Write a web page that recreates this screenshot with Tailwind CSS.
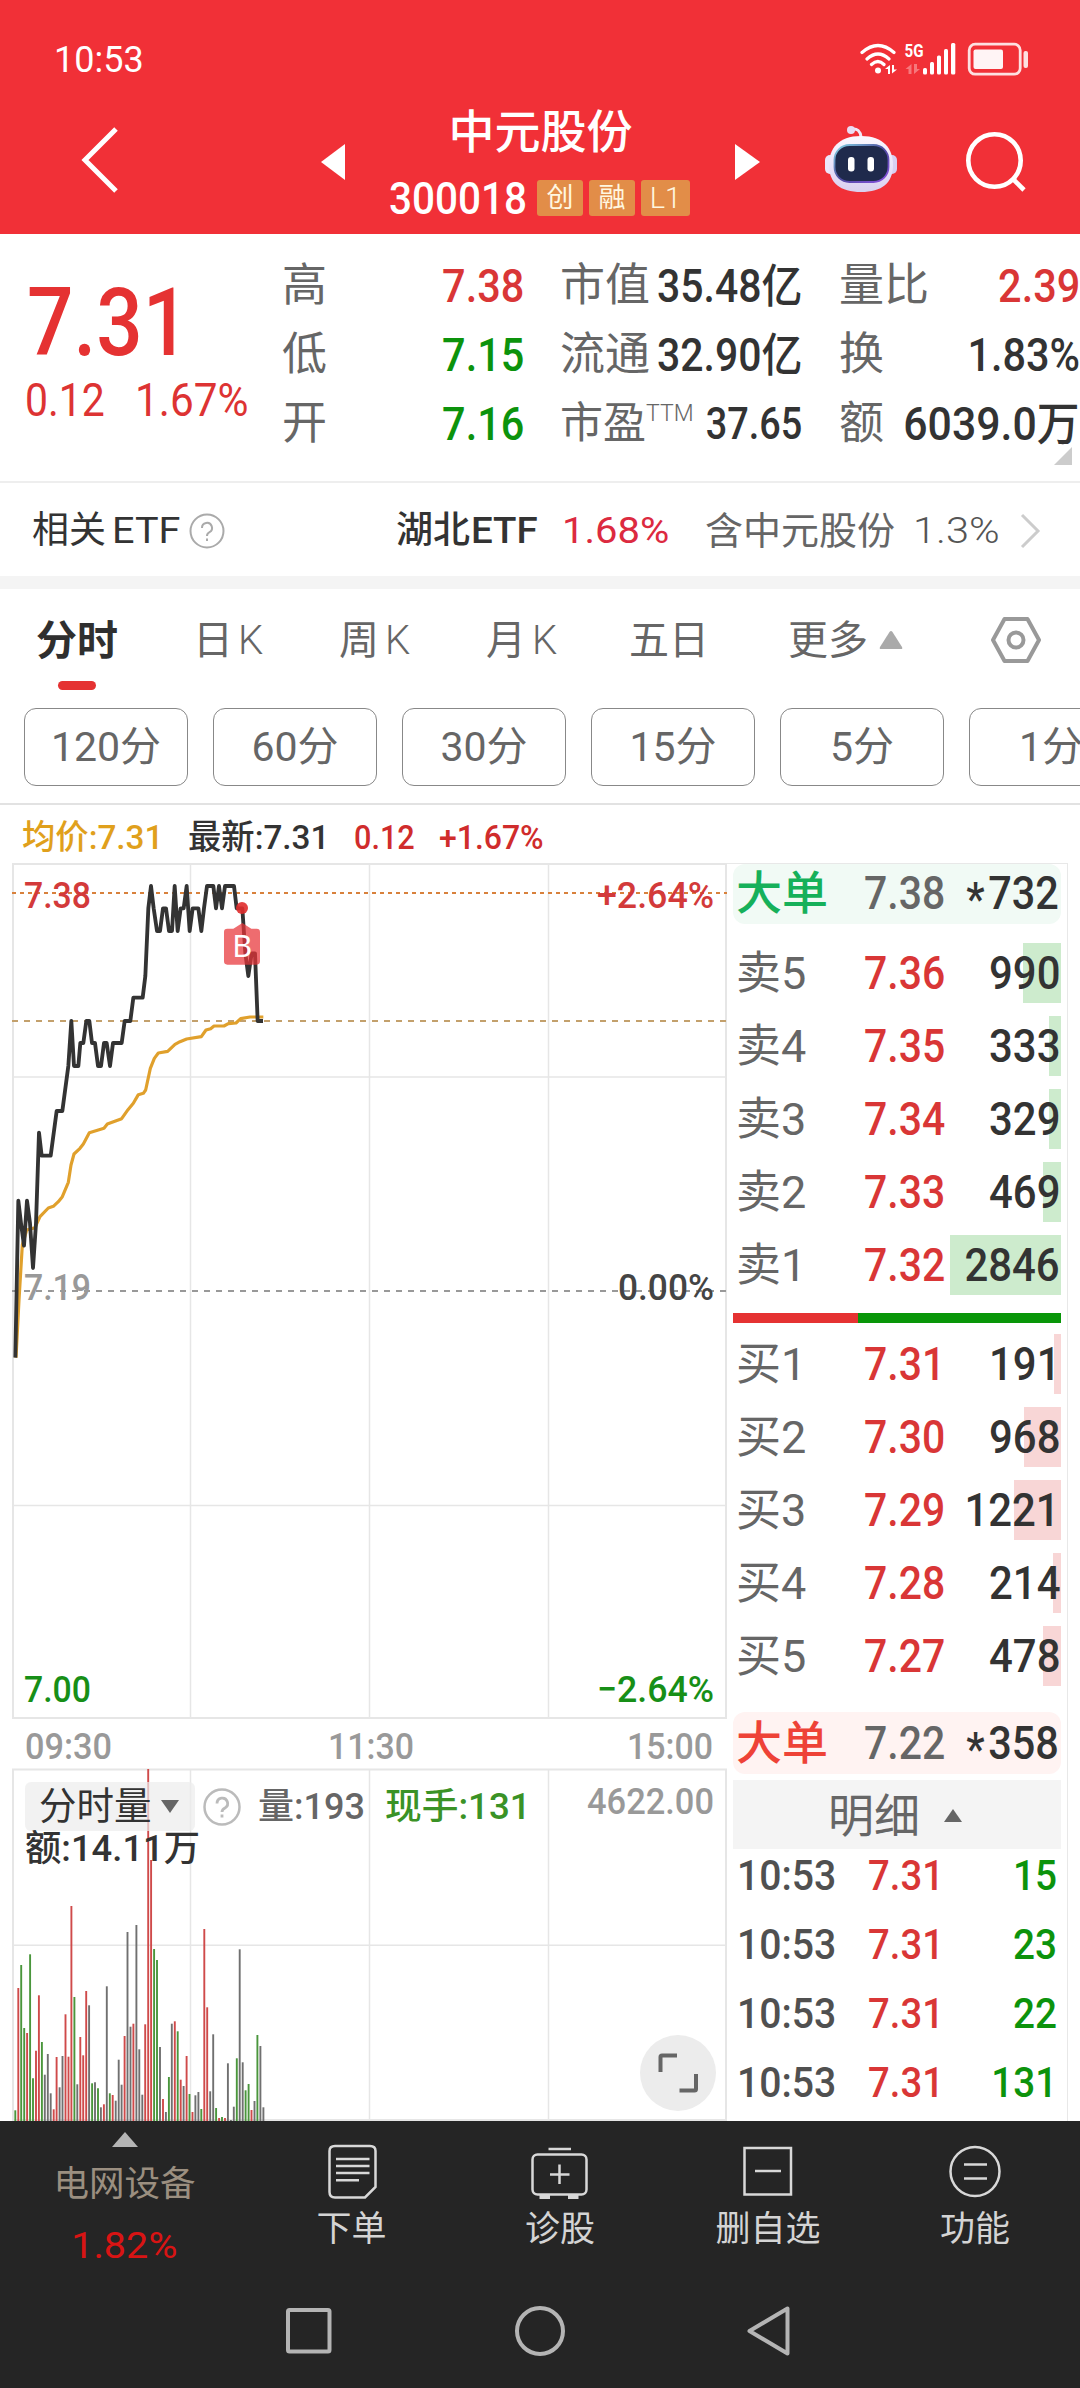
<!DOCTYPE html>
<html lang="zh-CN">
<head>
<meta charset="utf-8">
<title>中元股份 300018</title>
<script src="https://cdn.jsdelivr.net/npm/@tailwindcss/browser@4"></script>
</head>
<body class="bg-white">
<div class="flex h-[2388px] w-[1080px] flex-col overflow-hidden bg-white font-['Roboto','Noto_Sans_CJK_SC',sans-serif] leading-none whitespace-nowrap text-[#333]">

  <!-- Status bar + title bar -->
  <header class="h-[234px] shrink-0 bg-[#f13037] text-white">
    <div class="flex h-[84px] items-end justify-between pl-[54px] pr-[52px]">
      <span class="mb-[6px] text-[36px] leading-[36px]">10:53</span>
      <svg class="mb-[6px] h-[36px] w-[170px]" viewBox="858 42 170 36" fill="none" stroke="#fff" stroke-linecap="round">
        <g stroke-width="3.2"><path d="M862 52.500Q878 38.500 894 52.500M867 59Q878 49 889 59M871.500 64.500Q878 58.500 884 64.500"/></g>
        <g fill="#fff" stroke="none">
          <circle cx="878" cy="70.500" r="3"/>
          <path d="M885 69l5-4v9h-2v-5zM892 65v8.500l5-4h-3v-4.500z"/>
          <path d="M905.500 69l6-5v10h-3v-5zM914 64v10l6-5h-3v-5z" opacity=".35"/>
          <text x="904.500" y="57" font-size="18" font-weight="700" font-family="Roboto" textLength="19" lengthAdjust="spacingAndGlyphs">5G</text>
          <rect x="923" y="68" width="4" height="6.500" rx="1.500"/><rect x="930" y="62" width="4" height="12.500" rx="1.500"/><rect x="937" y="55.500" width="4" height="19" rx="1.500"/><rect x="944" y="49" width="4" height="25.500" rx="1.500"/><rect x="951" y="43" width="4.300" height="31.500" rx="1.500"/>
          <rect x="973.500" y="49.500" width="29.500" height="19.500" rx="2" opacity=".95"/>
          <rect x="1023.500" y="51" width="4.500" height="17" rx="2" opacity=".85"/>
        </g>
        <rect x="969.200" y="44.200" width="51" height="30" rx="6" stroke-width="2.800" opacity=".85"/>
      </svg>
    </div>
    <div class="flex h-[150px]">
      <div class="w-[320px] pt-[38px] pl-[78px]">
        <svg class="h-[76px] w-[44px]" viewBox="0 0 44 76" fill="none" stroke="#fff" stroke-width="5"><path d="M38 7L7 38L38 69"/></svg>
      </div>
      <svg class="mt-[60px] h-[36px] w-[26px]" viewBox="0 0 26 36" fill="#fff"><path d="M1 18L25 0V36z"/></svg>
      <div class="flex w-[389px] flex-col items-center">
        <h1 class="mt-[25px] text-[46px] leading-[46px] font-medium">中元股份</h1>
        <div class="mt-[25px] flex h-[36px] w-[303px] items-center">
          <span class="mt-[2px] w-[149px] origin-left scale-x-[.92] text-[44px] font-medium">300018</span>
          <span class="-ml-[1px] flex h-[36px] w-[46px] items-center justify-center rounded-[3px] bg-[#e28d48] text-[27px] text-[#fff7e0]">创</span>
          <span class="ml-[6px] flex h-[36px] w-[46px] items-center justify-center rounded-[3px] bg-[#e28d48] text-[27px] text-[#fff7e0]">融</span>
          <span class="ml-[6px] flex h-[36px] w-[49px] items-center justify-center rounded-[3px] bg-[#e28d48] text-[29px] font-light text-[#fff7e0]">L1</span>
        </div>
      </div>
      <svg class="mt-[60px] h-[36px] w-[26px]" viewBox="0 0 26 36" fill="#fff"><path d="M25 18L0 0V36z"/></svg>
      <svg class="mt-[38px] ml-[60px] h-[76px] w-[80px]" viewBox="821 122 80 76">
        <defs>
          <linearGradient id="shell" x1="0" y1="0" x2="0" y2="1"><stop offset="0" stop-color="#fbf8ff"/><stop offset=".65" stop-color="#e6def8"/><stop offset="1" stop-color="#d9d0ee"/></linearGradient>
          <linearGradient id="rim" x1="0" y1="0" x2="1" y2="1"><stop offset="0" stop-color="#86d7e6"/><stop offset=".5" stop-color="#4c4a9e"/><stop offset="1" stop-color="#8a4fe0"/></linearGradient>
        </defs>
        <path d="M861 137Q860 128 852 129" fill="none" stroke="#f1e6f6" stroke-width="3"/>
        <circle cx="851" cy="130" r="4" fill="#e9dcf3"/>
        <rect x="825" y="155" width="12" height="19" rx="5" fill="#ece6fa"/><rect x="885" y="155" width="12" height="19" rx="5" fill="#d8cff2"/>
        <path d="M861 136C884 136 893 149 893 165C893 183 882 192 861 192C840 192 829 183 829 165C829 149 838 136 861 136z" fill="url(#shell)"/>
        <rect x="834.500" y="145" width="54" height="37" rx="15" fill="#1f2a4c" stroke="url(#rim)" stroke-width="1.800"/>
        <rect x="848" y="157" width="6.500" height="14.500" rx="3" fill="#fff"/><rect x="867.500" y="157" width="6.500" height="14.500" rx="3" fill="#fff"/>
      </svg>
      <svg class="mt-[42px] ml-[62px] h-[68px] w-[68px]" viewBox="963 126 68 68" fill="none" stroke="#fff" stroke-width="4.600"><circle cx="994.500" cy="160.500" r="26.200"/><path d="M1013 179L1024 190"/></svg>
    </div>
  </header>

  <!-- Quote summary -->
  <section class="flex h-[249px] shrink-0 border-b-2 border-[#eee] text-[46px] font-medium">
    <div class="w-[282px] text-[#e53232]">
      <div class="mt-[46px] ml-[27px] h-[86px] w-[190px] origin-left scale-x-[.87] text-[94px] leading-[86px]">7.31</div>
      <div class="mt-[4px] flex h-[60px] items-center pl-[25px] font-normal text-[#dd3333]">
        <span class="w-[110px] origin-left scale-x-[.89]">0.12</span>
        <span class="w-[120px] origin-left scale-x-[.92]">1.67%</span>
      </div>
    </div>
    <div class="mt-[17px] w-[242px]">
      <div class="flex h-[69px] items-center justify-between"><span class="text-[45px] font-normal text-[#666]">高</span><span class="origin-right scale-x-[.9] text-[#d93636]">7.38</span></div>
      <div class="flex h-[69px] items-center justify-between"><span class="text-[45px] font-normal text-[#666]">低</span><span class="origin-right scale-x-[.9] text-[#0c930c]">7.15</span></div>
      <div class="flex h-[69px] items-center justify-between"><span class="text-[45px] font-normal text-[#666]">开</span><span class="origin-right scale-x-[.9] text-[#0c930c]">7.16</span></div>
    </div>
    <div class="mt-[17px] ml-[36px] w-[242px]">
      <div class="flex h-[69px] items-center justify-between"><span class="w-[90px] text-[45px] font-normal text-[#666]">市值</span><span class="flex w-[152px] justify-end"><span class="origin-right scale-x-[.89]">35.48亿</span></span></div>
      <div class="flex h-[69px] items-center justify-between"><span class="w-[90px] text-[45px] font-normal text-[#666]">流通</span><span class="flex w-[152px] justify-end"><span class="origin-right scale-x-[.89]">32.90亿</span></span></div>
      <div class="flex h-[69px] items-center justify-between"><span class="flex text-[43px] font-normal text-[#666]">市盈<span class="text-[23px] font-light">TTM</span></span><span class="flex w-[98px] justify-end"><span class="origin-right scale-x-[.86] text-[44px]">37.65</span></span></div>
    </div>
    <div class="mt-[17px] ml-[37px] w-[241px]">
      <div class="flex h-[69px] items-center justify-between"><span class="text-[45px] font-normal text-[#666]">量比</span><span class="origin-right scale-x-[.9] text-[#d93636]">2.39</span></div>
      <div class="flex h-[69px] items-center justify-between"><span class="text-[45px] font-normal text-[#666]">换</span><span class="origin-right scale-x-[.9]">1.83%</span></div>
      <div class="flex h-[69px] items-center justify-between"><span class="text-[45px] font-normal text-[#666]">额</span><span class="origin-right scale-x-[.93]">6039.0万</span></div>
      <svg class="-mt-[11px] ml-[215px] h-[18px] w-[18px]" viewBox="0 0 18 18" fill="#ccc"><path d="M18 0V18H0z"/></svg>
    </div>
  </section>

  <!-- Related ETF -->
  <section class="flex h-[93px] shrink-0 items-center pt-[2px] pl-[32px] text-[37px]">
    <span class="w-[80px]">相关</span><span class="w-[72px] origin-left scale-x-[1.07]">ETF</span>
    <svg class="ml-[5px] h-[36px] w-[36px]" viewBox="0 0 36 36" fill="none" stroke="#aaa" stroke-width="2"><circle cx="18" cy="18" r="16.500"/><path d="M13 15a5 5 0 1 1 7.500 4.200Q18 20.500 18 23M18 25.500v2.500"/></svg>
    <span class="ml-[171px] w-[75px] font-medium">湖北</span><span class="w-[72px] origin-left scale-x-[1.04] font-medium">ETF</span>
    <span class="ml-[19px] w-[110px] origin-left scale-x-[1.08] text-[#dc2a40]">1.68%</span>
    <span class="ml-[33px] w-[190px] text-[38px] text-[#666]">含中元股份</span>
    <span class="ml-[18px] w-[84px] origin-left scale-x-[1.12] font-light text-[#555]">1.3%</span>
    <svg class="ml-[20px] h-[36px] w-[26px]" viewBox="0 0 26 36" fill="none" stroke="#ccc" stroke-width="3"><path d="M5 2L21 18L5 34"/></svg>
  </section>
  <div class="h-[13px] shrink-0 bg-[#f4f4f4]"></div>

  <!-- Period tabs -->
  <nav class="flex h-[105px] shrink-0 text-[40px] leading-[104px] text-[#666]">
    <div class="ml-[36px] flex w-[82px] flex-col items-center">
      <span class="h-[92px] text-[41px] font-bold text-[#2f2f2f]">分时</span>
      <span class="h-[9px] w-[38px] rounded-full bg-[#e53232]"></span>
    </div>
    <span class="ml-[75px] w-[75px]">日<span class="ml-[5px] font-light">K</span></span>
    <span class="ml-[71px] w-[76px]">周<span class="ml-[6px] font-light">K</span></span>
    <span class="ml-[71px] w-[76px]">月<span class="ml-[6px] font-light">K</span></span>
    <span class="ml-[67px] w-[80px]">五日</span>
    <span class="ml-[79px] w-[82px]">更多</span>
    <svg class="mt-[41px] ml-[9px] h-[20px] w-[24px]" viewBox="0 0 24 20" fill="#aaa"><path d="M10.500 2Q12 0 13.500 2L23 17Q24 19 22 19H2Q0 19 1 17z"/></svg>
    <svg class="mt-[26px] ml-[87px] h-[50px] w-[52px]" viewBox="0 0 52 50" fill="none" stroke="#999" stroke-width="4" stroke-linejoin="round"><path d="M14.500 4H37.500L49 25L37.500 46H14.500L3 25z"/><circle cx="26" cy="25" r="7.500"/></svg>
  </nav>
  <div class="flex h-[111px] shrink-0 gap-[25px] overflow-hidden border-b-2 border-[#e2e2e2] pt-[14px] pl-[24px] text-[41px] text-[#666]">
    <span class="flex h-[78px] w-[164px] shrink-0 items-center justify-center rounded-[12px] border border-[#888]">120分</span>
    <span class="flex h-[78px] w-[164px] shrink-0 items-center justify-center rounded-[12px] border border-[#888]">60分</span>
    <span class="flex h-[78px] w-[164px] shrink-0 items-center justify-center rounded-[12px] border border-[#888]">30分</span>
    <span class="flex h-[78px] w-[164px] shrink-0 items-center justify-center rounded-[12px] border border-[#888]">15分</span>
    <span class="flex h-[78px] w-[164px] shrink-0 items-center justify-center rounded-[12px] border border-[#888]">5分</span>
    <span class="flex h-[78px] w-[164px] shrink-0 items-center justify-center rounded-[12px] border border-[#888]">1分</span>
  </div>
  <div class="flex h-[58px] shrink-0 items-center pt-[6px] pl-[22px] text-[34px] font-medium">
    <span class="w-[166px] origin-left scale-x-[.98] text-[#e0a01c]">均价:7.31</span>
    <span class="w-[166px] origin-left scale-x-[.98]">最新:7.31</span>
    <span class="w-[85px] origin-left scale-x-[.9] text-[#d02c2c]">0.12</span>
    <span class="origin-left scale-x-[.94] text-[#d02c2c]">+1.67%</span>
  </div>

  <!-- Charts and order book -->
  <main class="flex h-[1258px] shrink-0">
    <div class="relative w-[727px] shrink-0">
      <svg id="chart" class="block h-[1258px] w-[727px]" viewBox="0 863 727 1258" fill="none">
        <g stroke="#e6e6e6" stroke-width="1.500">
          <path d="M190.500 864V1718M369.500 864V1718M548.500 864V1718M12 1077H726M12 1505.500H726"/>
          <path d="M190.500 1769V2120M369.500 1769V2120M548.500 1769V2120M12 1945.300H726"/>
          <path d="M13 864H726V1718H13zM13 1769.500H726V2120H13z" stroke-width="2"/>
        </g>
        <path d="M12 893H727" stroke="#d8813c" stroke-width="2" stroke-dasharray="4 4"/>
        <path d="M12 1021H727" stroke="#c3a06c" stroke-width="2" stroke-dasharray="6 6"/>
        <path d="M12 1291H727" stroke="#999" stroke-width="2" stroke-dasharray="6 6"/>
        <g id="volume" stroke-width="1.900"></g>
        <g font-family="Roboto" font-size="37" font-weight="500">
          <text x="24" y="908" fill="#d33a3a" textLength="67" lengthAdjust="spacingAndGlyphs">7.38</text>
          <text x="24" y="1300" fill="#999" textLength="67" lengthAdjust="spacingAndGlyphs">7.19</text>
          <text x="24" y="1702" fill="#178f17" textLength="67" lengthAdjust="spacingAndGlyphs">7.00</text>
          <text x="597" y="908" fill="#d33a3a" textLength="117" lengthAdjust="spacingAndGlyphs">+2.64%</text>
          <text x="618" y="1300" fill="#444" textLength="96" lengthAdjust="spacingAndGlyphs">0.00%</text>
          <text x="597" y="1702" fill="#178f17" textLength="117" lengthAdjust="spacingAndGlyphs">−2.64%</text>
          <g fill="#999">
            <text x="25" y="1759" textLength="87" lengthAdjust="spacingAndGlyphs">09:30</text>
            <text x="328" y="1759" textLength="86" lengthAdjust="spacingAndGlyphs">11:30</text>
            <text x="627" y="1759" textLength="86" lengthAdjust="spacingAndGlyphs">15:00</text>
            <text x="587" y="1814" textLength="127" lengthAdjust="spacingAndGlyphs">4622.00</text>
          </g>
        </g>
        <g transform="translate(0 850) scale(.33333)" stroke-linejoin="round">
          <polyline stroke="#e0a02c" stroke-width="9.500" points="48,1523 57,1350 67,1185 80,1140 105,1133 120,1100 145,1074 160,1069 175,1055 187,1040 205,997 213,945 222,912 240,895 250,882 268,848 312,835 322,822 365,806 384,779 400,760 415,734 430,730 437,720 451,655 463,625 475,609 503,604 525,583 540,575 560,567 604,560 618,540 632,536 642,528 672,528 685,521 708,519 722,506 750,501 790,501"/>
          <polyline stroke="#333" stroke-width="11.500" points="46,1523 55,1052 63,1120 72,1187 81,1052 90,1120 99,1254 108,1120 117,848 125,917 152,917 170,783 187,783 205,648 214,513 222,648 235,648 241,579 250,579 259,513 268,513 276,579 285,579 294,648 303,648 312,579 320,579 330,648 339,579 365,579 374,513 391,513 400,443 428,443 436,378 445,175 453,108 461,175 471,243 480,243 489,175 498,175 507,243 516,243 524,108 533,243 542,175 551,175 560,108 569,243 578,175 595,175 604,243 612,175 621,108 640,108 648,175 657,108 666,175 675,108 702,108 710,175 727,175 736,310 745,378 755,310 765,310 773,513 789,513"/>
          <circle cx="726" cy="174" r="18" fill="#e02c2c" opacity=".9"/>
          <path d="M682 236H700L727 219L754 236H770Q780 236 780 246V334Q780 344 770 344H682Q672 344 672 334V246Q672 236 682 236z" fill="#e83338" opacity=".72"/>
          <text x="727" y="320" fill="#fff" font-family="Noto Sans" font-size="92" text-anchor="middle">B</text>
        </g>
      </svg>
      <div class="absolute top-[919px] left-[25px] flex h-[49px] w-[505px] items-center">
        <span class="flex h-[49px] w-[170px] items-center rounded-[6px] bg-[#ececec]/70 pl-[14px] text-[37.5px]">分时量
          <svg class="ml-[9px] h-[13px] w-[18px]" viewBox="0 0 18 13" fill="#666"><path d="M0 0H18L9 13z"/></svg>
        </span>
        <svg class="ml-[8px] h-[38px] w-[38px]" viewBox="0 0 38 38" fill="none" stroke="#bbb" stroke-width="2.500"><circle cx="19" cy="19" r="17.500"/><path d="M14 15.500a5.300 5.300 0 1 1 8 4.500Q19 21.500 19 24M19 26.500v3" stroke-width="2.800"/></svg>
        <span class="ml-[17px] w-[127px] origin-left text-[36px] font-medium text-[#666]">量:193</span>
        <span class="origin-left scale-x-[1.02] text-[36px] font-medium text-[#3a9226]">现手:131</span>
      </div>
      <div class="absolute top-[968px] left-[25px] origin-left scale-x-[1.01] text-[36px] leading-[36px] font-medium">额:14.11万</div>
      <svg class="absolute top-[1172px] left-[640px] h-[76px] w-[76px]" viewBox="0 0 76 76" fill="none" stroke="#666" stroke-width="4"><circle cx="38" cy="38" r="38" fill="#ececec" stroke="none"/><path d="M20.500 37V22Q20.500 20.500 22 20.500H37M56 39V54Q56 55.500 54.500 55.500H39.500"/></svg>
    </div>

    <aside class="flex w-[341px] shrink-0 flex-col border-t border-r border-[#e8e8e8] pr-[6px] pl-[6px]">
      <div class="flex h-[60px] shrink-0 items-center rounded-[12px] bg-[#f1faf5] pb-[2px] pl-[3px] text-[46px] font-medium">
        <span class="w-[128px] text-[#16b05a]">大单</span>
        <span class="w-[92px] origin-left scale-x-[.89] text-[#666]">7.38</span>
        <span class="flex flex-1 justify-end pr-[2px]"><span class="origin-right scale-x-[.9]"><span class="mr-[4px] inline-block translate-y-[6px]">*</span>732</span></span>
      </div>
      <div id="asks" class="mt-[19px] shrink-0"></div>
      <div class="mt-[5px] flex h-[10px] shrink-0"><i class="w-[125px] bg-[#e53232]"></i><i class="flex-1 bg-[#089608]"></i></div>
      <div id="bids" class="mt-[11px] shrink-0"></div>
      <div class="mt-[13px] flex h-[62px] shrink-0 items-center rounded-[12px] bg-[#fff3f2] pb-[1px] pl-[3px] text-[46px] font-medium">
        <span class="w-[128px] text-[#ee4237]">大单</span>
        <span class="w-[92px] origin-left scale-x-[.89] text-[#666]">7.22</span>
        <span class="flex flex-1 justify-end pr-[2px]"><span class="origin-right scale-x-[.9]"><span class="mr-[4px] inline-block translate-y-[6px]">*</span>358</span></span>
      </div>
      <div class="mt-[6px] flex h-[69px] shrink-0 items-center bg-[#f4f4f4] pt-[2px] pl-[95px] text-[46px] text-[#666]">明细
        <svg class="ml-[24px] h-[13px] w-[18px]" viewBox="0 0 18 13" fill="#666"><path d="M9 0L18 13H0z"/></svg>
      </div>
      <div id="trades" class="-mt-[8px]"></div>
    </aside>
  </main>

  <!-- Bottom bar -->
  <footer class="h-[267px] shrink-0 bg-[#252525]">
    <div class="flex h-[150px] text-[35px] text-[#d4d4d4]">
      <div class="flex w-[249px] flex-col items-center pt-[11px]">
        <svg class="h-[15px] w-[26px]" viewBox="0 0 26 15" fill="#b5b5b5"><path d="M13 0L26 15H0z"/></svg>
        <span class="mt-[20px] text-[35.5px] text-[#9b8f80]">电网设备</span>
        <span class="mt-[25px] scale-x-[1.1] text-[36px] text-[#d91414]">1.82%</span>
      </div>
      <div class="flex w-[205px] flex-col items-center pt-[21px]">
        <svg class="h-[60px] w-[60px]" viewBox="322 2142 60 60" fill="none" stroke="#d8d8d8" stroke-width="2.500"><path d="M335 2146H370Q375.500 2146 375.500 2151V2187L365 2197.500H335Q329.500 2197.500 329.500 2192V2151Q329.500 2146 335 2146z"/><path d="M336 2159H369.500M336 2166H369.500M336 2173H369.500M336 2180.300H359"/></svg>
        <span class="mt-[10px]">下单</span>
      </div>
      <div class="flex w-[212px] flex-col items-center pt-[21px]">
        <svg class="h-[60px] w-[60px]" viewBox="530 2142 60 60" fill="none" stroke="#d8d8d8" stroke-width="2.500"><rect x="532.500" y="2154.500" width="54" height="40" rx="5"/><path d="M548.500 2149H571M559.500 2164.500V2184M550 2174.500H569.500"/><path d="M539.500 2197H550M568 2197H578.500" stroke-width="4"/></svg>
        <span class="mt-[10px]">诊股</span>
      </div>
      <div class="flex w-[204px] flex-col items-center pt-[21px]">
        <svg class="h-[60px] w-[60px]" viewBox="737 2142 60 60" fill="none" stroke="#d8d8d8" stroke-width="2.500"><rect x="743.500" y="2148" width="46.500" height="46.500"/><path d="M754 2171H780"/></svg>
        <span class="mt-[10px]">删自选</span>
      </div>
      <div class="flex w-[210px] flex-col items-center pt-[21px]">
        <svg class="h-[60px] w-[60px]" viewBox="945 2142 60 60" fill="none" stroke="#d8d8d8" stroke-width="2.500"><circle cx="975" cy="2171.500" r="24.500"/><path d="M964 2164.500H987M964 2178.500H987"/></svg>
        <span class="mt-[10px]">功能</span>
      </div>
    </div>
    <div class="flex pt-[34px] pl-[283px]">
      <svg class="h-[52px] w-[52px]" viewBox="0 0 52 52" fill="none" stroke="#b4b4b4" stroke-width="4"><rect x="5" y="5" width="41.500" height="41.500" rx="1.500"/></svg>
      <svg class="ml-[179px] h-[52px] w-[52px]" viewBox="0 0 52 52" fill="none" stroke="#b4b4b4" stroke-width="4"><circle cx="26" cy="26" r="23"/></svg>
      <svg class="ml-[178px] h-[52px] w-[52px]" viewBox="0 0 52 52" fill="none" stroke="#b4b4b4" stroke-width="4" stroke-linejoin="round"><path d="M43.500 3.500V48.500L5.500 26z"/></svg>
    </div>
  </footer>
</div>

<script>
  // One order book level: label, price, quantity, depth bar width, bar colour class
  const level = (bar) => ([name, price, qty, w]) => `
    <div class="flex h-[73px] items-start">
      <div class="relative flex h-[60px] w-full items-center pl-[3px] text-[46px] font-medium">
        <i class="absolute top-0 right-0 h-[60px] ${bar}" style="width:${w}px"></i>
        <span class="w-[128px] text-[45px] font-normal text-[#666]">${name}</span>
        <span class="w-[92px] origin-left scale-x-[.89] text-[#d93636]">${price}</span>
        <span class="relative flex flex-1 justify-end pr-[1px]"><span class="origin-right scale-x-[.91]">${qty}</span></span>
      </div>
    </div>`;
  document.getElementById('asks').innerHTML = [
    ['卖5','7.36','990',38],['卖4','7.35','333',12],['卖3','7.34','329',12],['卖2','7.33','469',18],['卖1','7.32','2846',111]
  ].map(level('bg-[#cdebcd]')).join('');
  document.getElementById('bids').innerHTML = [
    ['买1','7.31','191',7],['买2','7.30','968',37],['买3','7.29','1221',47],['买4','7.28','214',8],['买5','7.27','478',18]
  ].map(level('bg-[#f8d6d6]')).join('');
  document.getElementById('trades').innerHTML = ['15','23','22','131'].map(v => `
    <div class="flex h-[69px] items-center pl-[4px] text-[43px] font-medium">
      <span class="w-[131px] origin-left scale-x-[.91] text-[#505050]">10:53</span>
      <span class="w-[90px] origin-left scale-x-[.89] text-[#d93636]">7.31</span>
      <span class="flex flex-1 justify-end pr-[4px]"><span class="origin-right scale-x-[.9] text-[#0c930c]">${v}</span></span>
    </div>`).join('');

  // Per-minute volume: colour key followed by bar height in thirds of a pixel
  const vol = 'g32 r399 g468 g279 r264 g500 g128 r211 r377 g237 k139 k201 k83 r35 r192 k101 k195 r320 r193 r645 g372 k110 r252 r197 r390 k347 g113 k116 g98 k41 r50 k404 g83 r78 k61 k184 k109 r255 k567 k283 r292 k588 k215 k79 r290 r1056 r783 g516 g483 k222 r66 k27 g132 k292 r299 g269 r124 k105 r195 g81 r27 k77 k87 g36 r576 r341 k89 k260 g39 r9 g12 r9 k173 k3 k43 g188 k515 k176 g92 g111 r33 k60 g258 k225 k41'.split(' ');
  const ink = { r: '#cf4a4a', g: '#4a963c', k: '#707070' };
  document.getElementById('volume').innerHTML = vol.map((v, i) => {
    const x = (15.3 + i * 2.953).toFixed(1);
    return `<path stroke="${ink[v[0]]}" d="M${x} 2121V${(2121 - v.slice(1) / 3).toFixed(1)}"/>`;
  }).join('');
</script>
</body>
</html>
